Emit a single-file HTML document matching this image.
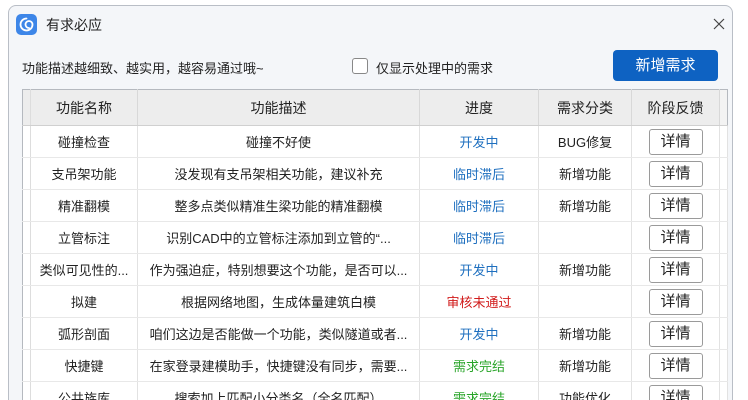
<!DOCTYPE html>
<html style="height:400px;overflow:hidden"><head><meta charset="utf-8"><style>
*{margin:0;padding:0;box-sizing:border-box}
body{width:748px;height:400px;overflow:hidden;background:#fff;font-family:"Liberation Sans","Noto Sans CJK SC",sans-serif;font-size:13px;color:#222;position:relative}
.win{position:absolute;left:8px;top:5px;width:725px;height:395px;border:1px solid #b9bec6;border-bottom:none;border-radius:8px 8px 0 0;background:#f4f6f9}
.icon{position:absolute;left:16px;top:14px;width:21px;height:21px;border-radius:5px;background:#3d86e8}
.title{position:absolute;left:46px;top:15px;font-size:14px;color:#222}
.close{position:absolute;left:713px;top:18px}
.hint{position:absolute;left:22px;top:58px;font-size:13px}
.cb{position:absolute;left:352px;top:58px;width:16px;height:16px;border:1px solid #888;border-radius:3px;background:#fff}
.cbl{position:absolute;left:376px;top:58px;font-size:13px}
.btn{position:absolute;left:613px;top:50px;width:105px;height:31px;border-radius:4px;background:#0e62c2;color:#fff;font-size:15px;text-align:center;line-height:31px}
table{position:absolute;left:22px;top:89px;width:705px;border-collapse:collapse;background:#fff;border:1px solid #b5b9bf;table-layout:fixed}
th{background:#ededed;height:36px;font-weight:normal;font-size:14px;border-right:1px solid #d8d8d8;border-bottom:1px solid #d0d0d0}
td{height:32px;text-align:center;border-right:1px solid #e2e2e2;border-bottom:1px solid #e8e8e8;white-space:nowrap;overflow:hidden;font-size:13px}
.g{background:#ededed;border-right:1px solid #ddd}
td.g{background:#fff;border-bottom:1px solid #e8e8e8}
.b{color:#1e6fbf}.r{color:#d11b1b}.gr{color:#2aa52a}
.d{display:inline-block;width:54px;height:26px;border:1px solid #9a9a9a;border-radius:3px;line-height:24px;font-size:15px;background:#fff}
</style></head><body>
<div class="win"></div>
<div class="icon"><svg width="21" height="21" viewBox="0 0 21 21"><path d="M10.5 4.5a6 6 0 1 0 6 6 3.5 3.5 0 1 0-3.5 3.5" fill="none" stroke="#fff" stroke-width="1.8" stroke-linecap="round"/></svg></div>
<div class="title">有求必应</div>
<div class="close"><svg width="12" height="12" viewBox="0 0 12 12"><path d="M1 1L11 11M11 1L1 11" stroke="#444" stroke-width="1.2"/></svg></div>
<div class="hint">功能描述越细致、越实用，越容易通过哦~</div>
<div class="cb"></div><div class="cbl">仅显示处理中的需求</div>
<div class="btn">新增需求</div>
<table>
<colgroup><col style="width:8px"><col style="width:107px"><col style="width:282px"><col style="width:119px"><col style="width:93px"><col style="width:88px"><col style="width:8px"></colgroup>
<tr><th class="g"></th><th>功能名称</th><th>功能描述</th><th>进度</th><th>需求分类</th><th>阶段反馈</th><th style="background:#f3f3f3;border-right:none"></th></tr>
<tr><td class="g"></td><td>碰撞检查</td><td>碰撞不好使</td><td class="b">开发中</td><td>BUG修复</td><td><span class="d">详情</span></td><td></td></tr>
<tr><td class="g"></td><td>支吊架功能</td><td>没发现有支吊架相关功能，建议补充</td><td class="b">临时滞后</td><td>新增功能</td><td><span class="d">详情</span></td><td></td></tr>
<tr><td class="g"></td><td>精准翻模</td><td>整多点类似精准生梁功能的精准翻模</td><td class="b">临时滞后</td><td>新增功能</td><td><span class="d">详情</span></td><td></td></tr>
<tr><td class="g"></td><td>立管标注</td><td>识别CAD中的立管标注添加到立管的“...</td><td class="b">临时滞后</td><td></td><td><span class="d">详情</span></td><td></td></tr>
<tr><td class="g"></td><td>类似可见性的...</td><td>作为强迫症，特别想要这个功能，是否可以...</td><td class="b">开发中</td><td>新增功能</td><td><span class="d">详情</span></td><td></td></tr>
<tr><td class="g"></td><td>拟建</td><td>根据网络地图，生成体量建筑白模</td><td class="r">审核未通过</td><td></td><td><span class="d">详情</span></td><td></td></tr>
<tr><td class="g"></td><td>弧形剖面</td><td>咱们这边是否能做一个功能，类似隧道或者...</td><td class="b">开发中</td><td>新增功能</td><td><span class="d">详情</span></td><td></td></tr>
<tr><td class="g"></td><td>快捷键</td><td>在家登录建模助手，快捷键没有同步，需要...</td><td class="gr">需求完结</td><td>新增功能</td><td><span class="d">详情</span></td><td></td></tr>
<tr><td class="g"></td><td>公共族库</td><td>搜索加上匹配小分类名（全名匹配）</td><td class="gr">需求完结</td><td>功能优化</td><td><span class="d">详情</span></td><td></td></tr>
</table>
</body></html>
